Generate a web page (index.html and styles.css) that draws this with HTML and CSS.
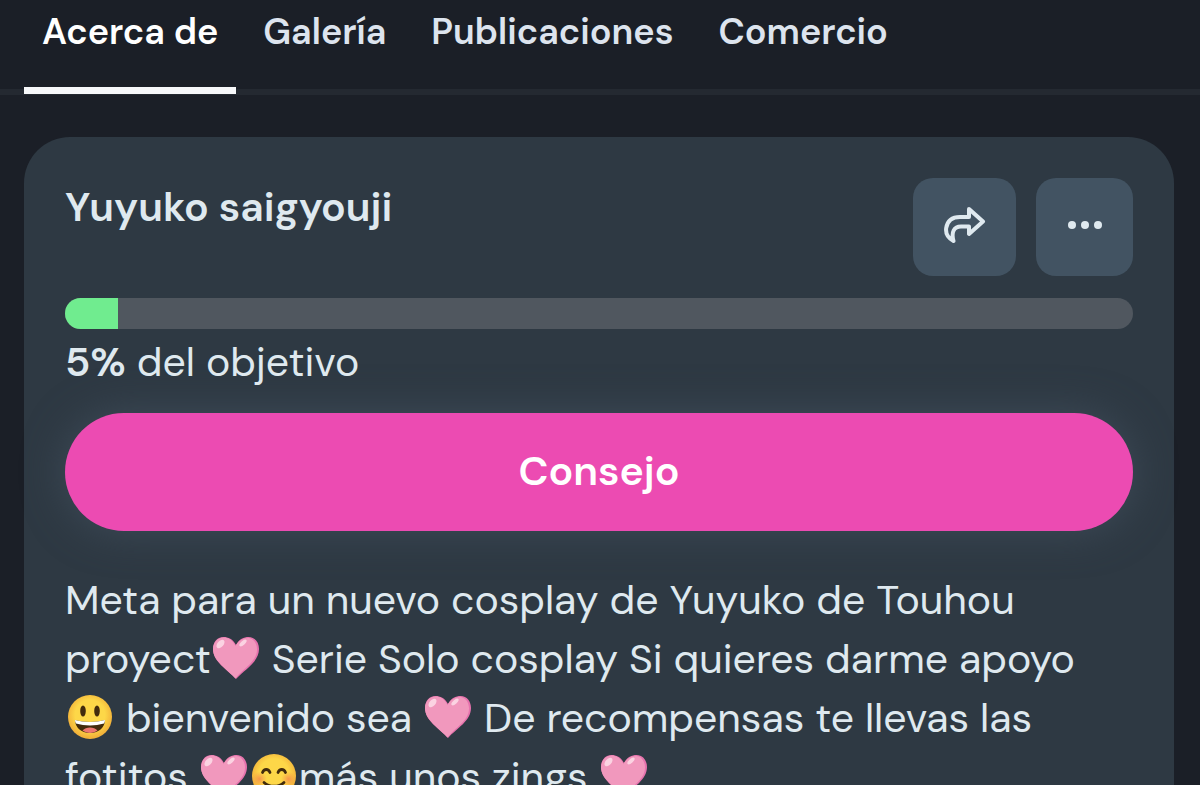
FILE: index.html
```html
<!DOCTYPE html>
<html lang="es">
<head>
    <meta charset="UTF-8">
    <meta name="viewport" content="width=device-width, initial-scale=1.0">
    <title>Yuyuko saigyouji</title>
    <link rel="stylesheet" href="styles.css">
</head>
<body>
    <!-- shared emoji shapes -->
    <svg class="sprite" aria-hidden="true">
        <defs>
            <radialGradient id="face" cx="50%" cy="45%" r="52%">
                <stop offset="0.65" stop-color="#fdd748"/>
                <stop offset="1" stop-color="#f2b23a"/>
            </radialGradient>
            <radialGradient id="blush">
                <stop offset="0" stop-color="#f4804a" stop-opacity="0.75"/>
                <stop offset="1" stop-color="#f4904a" stop-opacity="0"/>
            </radialGradient>
        </defs>
        <symbol id="heart" viewBox="0 0 48 48">
            <path fill="#e673ad" d="M24 10C21 4 16 2 11.500 2C5 2 1 7.500 1 14C1 27 15 34 24 44C33 34 47 27 47 14C47 7.500 43 2 36.500 2C32 2 27 4 24 10Z"/>
            <path fill="#f198bd" d="M23.500 11C21 5 16 2.500 11.500 2.500C5.500 2.500 1 8 1 14C1 26 14 33 23.500 43.500C31 33.500 45 27 45 14.500C45 8 41 3 36 3C31 3 26 6 23.500 11Z"/>
            <ellipse cx="8.500" cy="9" rx="5" ry="3" fill="#fbd3e2" transform="rotate(-48 8.500 9)"/>
            <ellipse cx="31" cy="8" rx="4.500" ry="2" fill="#fbd3e2" transform="rotate(-42 31 8)"/>
        </symbol>
        <symbol id="grin" viewBox="0 0 48 48">
            <circle cx="24" cy="23" r="22" fill="url(#face)"/>
            <ellipse cx="17" cy="17" rx="2.800" ry="5.500" fill="#422b0d"/>
            <ellipse cx="31" cy="17" rx="2.800" ry="5.500" fill="#422b0d"/>
            <path fill="#422b0d" d="M9 26C18 28.500 30 28.500 39 26C39 33 33 39 24 39C15 39 9 33 9 26Z"/>
            <path fill="#fff" d="M9 26C18 28.500 30 28.500 39 26C39 27.500 38.500 28.500 38 29.500C29 32 19 32 10 29.500C9.500 28.500 9 27.500 9 26Z"/>
            <path fill="#ed7770" d="M16.500 36.500C20 32.500 28 32.500 31.500 36.500C27 39.800 21 39.800 16.500 36.500Z"/>
        </symbol>
        <symbol id="smile" viewBox="0 0 48 48">
            <circle cx="24" cy="23" r="22" fill="url(#face)"/>
            <circle cx="9.500" cy="26" r="7.500" fill="url(#blush)"/>
            <circle cx="38.500" cy="26" r="7.500" fill="url(#blush)"/>
            <g fill="none" stroke="#422b0d" stroke-width="2.800" stroke-linecap="round">
                <path d="M12.500 19.500C14 15.500 18.500 15.500 20 19.500"/>
                <path d="M28 19.500C29.500 15.500 34 15.500 35.500 19.500"/>
                <path d="M14 29.500C19 34.500 29 34.500 34 29.500"/>
            </g>
        </symbol>
    </svg>

    <nav class="tabs">
        <a href="#acerca" class="tab active" aria-current="page">Acerca de</a>
        <a href="#galeria" class="tab">Galería</a>
        <a href="#publicaciones" class="tab">Publicaciones</a>
        <a href="#comercio" class="tab">Comercio</a>
    </nav>

    <main class="card" id="acerca">
        <header class="card-header">
            <h1>Yuyuko saigyouji</h1>
            <div class="actions">
                <button type="button" class="icon-button share" aria-label="Compartir">
                    <svg viewBox="0 0 44 40" width="44" height="40" aria-hidden="true">
                        <path d="M26 4L40 16.500L26 29V21.500H18C11 21.500 8 27 10.500 36C5 33 2.500 28 3.200 23C4.500 15 10 12 17 12H26Z"/>
                    </svg>
                </button>
                <button type="button" class="icon-button more" aria-label="Más opciones">
                    <svg viewBox="0 0 36 10" width="36" height="10" aria-hidden="true">
                        <circle cx="5" cy="5" r="4"/>
                        <circle cx="18" cy="5" r="4"/>
                        <circle cx="31" cy="5" r="4"/>
                    </svg>
                </button>
            </div>
        </header>

        <progress class="goal-bar" value="5" max="100" aria-labelledby="goal-label"></progress>
        <p class="goal-label" id="goal-label"><strong>5%</strong> del objetivo</p>

        <button type="button" class="tip-button">Consejo</button>

        <p class="description">Meta para un nuevo cosplay de Yuyuko de Touhou proyect<svg class="emoji" role="img" aria-label="corazón rosa"><use href="#heart"/></svg> Serie Solo cosplay Si quieres darme apoyo <svg class="emoji" role="img" aria-label="cara feliz"><use href="#grin"/></svg> bienvenido sea <svg class="emoji" role="img" aria-label="corazón rosa"><use href="#heart"/></svg> De recompensas te llevas las fotitos <svg class="emoji" role="img" aria-label="corazón rosa"><use href="#heart"/></svg><svg class="emoji" role="img" aria-label="cara sonriente"><use href="#smile"/></svg>más unos zings <svg class="emoji" role="img" aria-label="corazón rosa"><use href="#heart"/></svg></p>
    </main>
</body>
</html>
```

FILE: styles.css
```css
* {
    box-sizing: border-box;
}
body {
    margin: 0;
    background-color: #1b1f27;
    color: #dfe9ef;
    font-family: "DM Sans", Inter, sans-serif;
    font-size: 41px;
}
h1, p {
    margin: 0;
}
button {
    border: none;
    font-family: inherit;
    cursor: pointer;
}
.sprite {
    position: absolute;
    width: 0;
    height: 0;
}
.tabs {
    display: flex;
    gap: 9px;
    height: 95px;
    padding: 0 24px;
    border-bottom: 6px solid #242931;
}
.tab {
    height: 94px;
    padding: 8px 18px 0;
    border-bottom: 7px solid transparent;
    color: #dde4ee;
    font-size: 36px;
    font-weight: 600;
    line-height: 48px;
    text-decoration: none;
}
.tab.active {
    border-color: #f7f8fa;
    color: #fff;
}
.card {
    margin: 42px 26px 24px 24px;
    padding: 41px;
    border-radius: 46px;
    background-color: #2e3943;
}
.card-header {
    display: flex;
    justify-content: space-between;
    align-items: flex-start;
}
h1 {
    font-size: 41px;
    font-weight: 600;
    line-height: 58px;
}
.actions {
    display: flex;
    gap: 20px;
}
.icon-button {
    display: flex;
    align-items: center;
    justify-content: center;
    width: 97px;
    height: 98px;
    padding: 0 0 4px;
    border-radius: 20px;
    background-color: #425362;
}
.share {
    width: 103px;
}
.share path {
    fill: none;
    stroke: #dfe9ef;
    stroke-width: 4;
    stroke-linejoin: round;
}
.more circle {
    fill: #dfe9ef;
}
.goal-bar {
    display: block;
    width: 100%;
    height: 31px;
    margin-top: 22px;
    border: none;
    border-radius: 16px;
    overflow: hidden;
    background-color: #50575f;
    appearance: none;
}
.goal-bar::-webkit-progress-bar {
    background-color: #50575f;
}
.goal-bar::-webkit-progress-value {
    background-color: #70ec8f;
}
.goal-label {
    margin-top: 4px;
    line-height: 58px;
}
.goal-label strong {
    font-weight: 600;
}
.tip-button {
    display: block;
    width: 100%;
    height: 118px;
    margin: 22px 0 40px;
    padding: 0 0 2px;
    border-radius: 59px;
    background-color: #ec4bb2;
    box-shadow: 0 0 40px #3e4b58;
    color: #fff;
    font-size: 41px;
    font-weight: 600;
}
.description {
    line-height: 59px;
}
.emoji {
    width: 48px;
    height: 48px;
    margin: 0 1px;
    vertical-align: -10px;
}
```
